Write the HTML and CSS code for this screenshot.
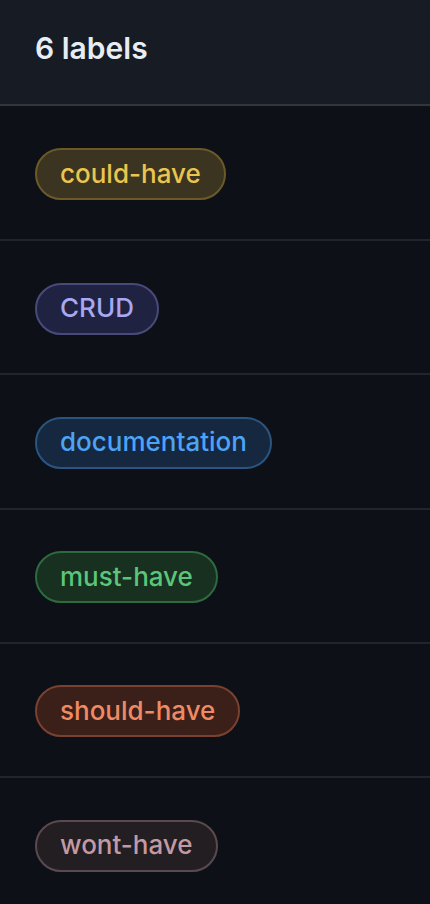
FILE: index.html
```html
<!DOCTYPE html>
<html lang="en">
<head>
<meta charset="utf-8">
<title>Labels</title>
<link rel="stylesheet" href="styles.css">
</head>
<body>
<div class="box">
  <div class="box-header"><h2 class="count">6 labels</h2></div>
  <ul class="list">
    <li class="row"><span class="label label-could">could-have</span></li>
    <li class="row"><span class="label label-crud">CRUD</span></li>
    <li class="row"><span class="label label-docs">documentation</span></li>
    <li class="row"><span class="label label-must">must-have</span></li>
    <li class="row"><span class="label label-should">should-have</span></li>
    <li class="row"><span class="label label-wont">wont-have</span></li>
  </ul>
</div>
</body>
</html>
```
FILE: styles.css
```css
* { box-sizing: border-box; }
html, body {
  margin: 0;
  padding: 0;
  background: #0d1117;
  font-family: Inter, "Noto Sans", "Liberation Sans", sans-serif;
  color: #e6edf3;
}
.box { width: 430px; }
.box-header {
  height: 106px;
  background: #171b23;
  border-bottom: 2px solid #30363d;
  display: flex;
  align-items: center;
  padding: 0 35px;
}
.count {
  margin: 0;
  font-size: 30px;
  font-weight: 600;
  color: #e6edf3;
  padding-bottom: 8px;
}
.list { list-style: none; margin: 0; padding: 0; }
.row {
  height: 134.25px;
  border-bottom: 2px solid #21262d;
  display: flex;
  align-items: center;
  padding: 3px 35px 0;
}
.row:first-child { height: 135px; }
.label {
  display: inline-flex;
  align-items: center;
  height: 52px;
  padding: 0 23px 1px;
  border-radius: 26px;
  border: 2px solid;
  font-size: 26px;
  font-weight: 500;
  line-height: 1;
}
.label-could { background: #3a3420; color: #eac54f; border-color: #6b5a28; }
.label-crud { background: #1f2240; color: #a8a8f2; border-color: #4a4a7a; }
.label-docs { background: #15283f; color: #4da3f5; border-color: #2a5580; }
.label-must { background: #17301f; color: #5bc57a; border-color: #2e6a40; }
.label-should { background: #3a2019; color: #f08a65; border-color: #7a4030; }
.label-wont { background: #231e22; color: #c29aa4; border-color: #5a4a50; }
```
